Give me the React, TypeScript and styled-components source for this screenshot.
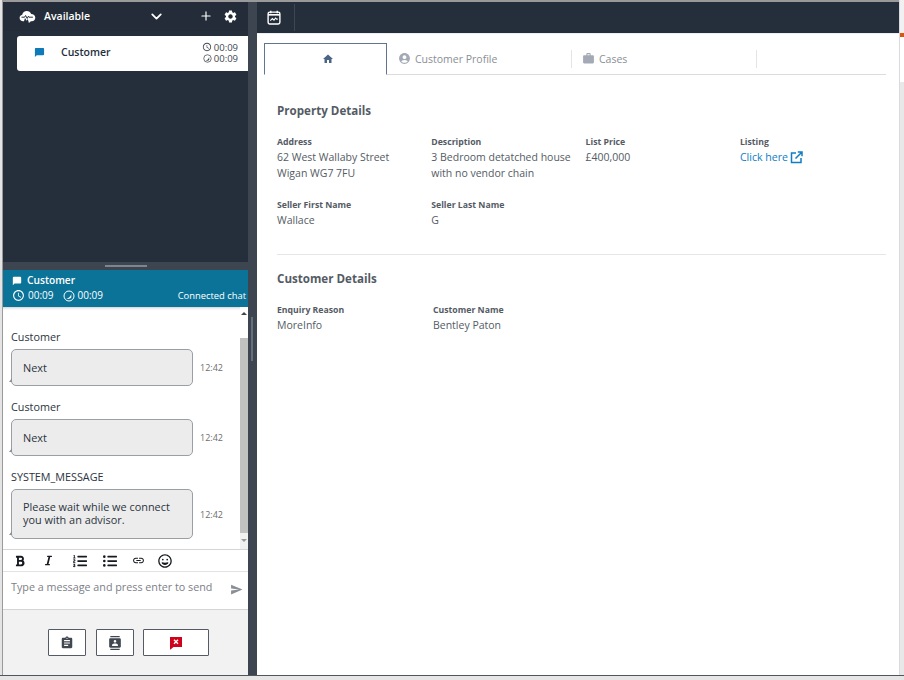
import React from "react";
import styled, { createGlobalStyle } from "styled-components";
import { FiChevronDown, FiPlus } from "react-icons/fi";
import { FaBold, FaItalic, FaListOl, FaListUl, FaRegGrin } from "react-icons/fa";
import {
  MdAccessTime,
  MdAccountCircle,
  MdAssignment,
  MdChatBubble,
  MdContacts,
  MdHome,
  MdLink,
  MdSend,
  MdSettings,
  MdWork,
} from "react-icons/md";

const GlobalStyle = createGlobalStyle`
  html, body {
    margin: 0;
    padding: 0;
    background: #e6e6e6;
    font-family: "Open Sans", "Noto Sans", "Liberation Sans", sans-serif;
  }
  * {
    box-sizing: border-box;
  }
`;

const Page = styled.div`
  width: 904px;
  height: 680px;
  overflow: hidden;
  background: #e6e6e6;
`;
const Window = styled.div`
  height: 676px;
  display: flex;
  padding: 2px 0 0 3px;
  background: linear-gradient(to right, #e4e4e4 0, #e4e4e4 2px, #9a9a9a 2px, #9a9a9a 3px);
  border-bottom: 1px solid #50565e;
`;
const Side = styled.div`
  width: 245px;
  display: flex;
  flex-direction: column;
  flex: none;
`;
const Gutter = styled.div`
  width: 9px;
  flex: none;
  background: #3c4550;
  padding: 315px 0 0 3px;
`;
const GutterGrip = styled.div`
  width: 2px;
  height: 44px;
  background: #66707b;
`;
const Main = styled.div`
  width: 642px;
  flex: none;
  display: flex;
  flex-direction: column;
`;
const QueuePanel = styled.div`
  height: 260px;
  background: #252f3b;
  display: flex;
  flex-direction: column;
`;
const StatusBar = styled.div`
  height: 29px;
  display: flex;
  align-items: center;
  padding: 0 10px 1px 16px;
  color: #fff;
  background: #232c38;
  font-size: 10.5px;
  font-weight: 600;
`;
const StatusLabel = styled.span`
  margin-left: 8px;
  width: 104px;
`;
const StatusTools = styled.div`
  display: flex;
  align-items: center;
  margin-left: auto;
  gap: 10px;
`;
const ContactCard = styled.div`
  margin: 5px 0 0 14px;
  height: 35px;
  background: #fff;
  border-radius: 3px 0 0 3px;
  display: flex;
  align-items: center;
  padding: 0 10px 2px 17px;
  color: #232f3e;
`;
const ContactName = styled.span`
  margin: 0 0 2px 16px;
  font-size: 10.5px;
  font-weight: 600;
  flex: 1;
`;
const Timers = styled.div`
  display: flex;
  flex-direction: column;
  font-size: 9.5px;
  line-height: 11px;
  color: #414750;
`;
const TimerRow = styled.div`
  display: flex;
  align-items: center;
  justify-content: flex-end;
  gap: 2px;
`;
const Splitter = styled.div`
  height: 8px;
  background: #3c4550;
  display: flex;
  justify-content: center;
  padding-top: 3px;
`;
const SplitGrip = styled.div`
  width: 42px;
  height: 2px;
  background: #7d858e;
`;
const ChatHeader = styled.div`
  height: 37px;
  background: #0b7398;
  color: #fff;
  padding: 3px 2px 0 9px;
  display: flex;
  flex-direction: column;
  font-size: 10px;
`;
const ChatTitle = styled.div`
  display: flex;
  align-items: center;
  gap: 5px;
  font-size: 10.2px;
  font-weight: 600;
  line-height: 15px;
`;
const ChatMeta = styled.div`
  display: flex;
  align-items: center;
  line-height: 15px;
  gap: 3px;
`;
const MetaGap = styled.span`
  width: 3px;
`;
const ChatState = styled.span`
  margin-left: auto;
  white-space: nowrap;
  font-size: 9.4px;
`;
const ChatBody = styled.div`
  height: 242px;
  background: #fff;
  display: flex;
  box-shadow: inset 0 3px 3px -2px rgba(0, 0, 0, 0.2);
`;
const Messages = styled.div`
  flex: 1;
  padding: 22px 0 0 8px;
  display: flex;
  flex-direction: column;
  gap: 13px;
  color: #2b3440;
`;
const Message = styled.div`
  display: flex;
  flex-direction: column;
  gap: 4px;
`;
const Sender = styled.div`
  font-size: 10.8px;
  line-height: 16px;
`;
const BubbleRow = styled.div`
  display: flex;
  align-items: center;
  gap: 7px;
`;
const Bubble = styled.div<{ $tall?: boolean }>`
  position: relative;
  width: 182px;
  height: ${(p) => (p.$tall ? "50px" : "37px")};
  padding: ${(p) => (p.$tall ? "0 11px 3px" : "0 11px 1px")};
  display: flex;
  align-items: center;
  background: #ececec;
  border: 1px solid #9a9fa5;
  border-radius: 5px;
  font-size: 10.9px;
  line-height: 13px;
  &::before {
    content: "";
    position: absolute;
    left: -3px;
    bottom: 3px;
    border-style: solid;
    border-width: 0 0 4px 3px;
    border-color: transparent transparent #8c9197 transparent;
  }
`;
const Time = styled.span`
  font-size: 9px;
  color: #6d6d6d;
`;
const ScrollTrack = styled.div`
  width: 8px;
  background: #f1f1f1;
  display: flex;
  flex-direction: column;
  align-items: center;
`;
const ScrollTop = styled.div`
  flex: none;
  height: 31px;
  width: 100%;
  background: #fff;
  display: flex;
  justify-content: center;
  padding-top: 5px;
  &::after {
    content: "";
    height: 0;
    border-style: solid;
    border-width: 0 3px 3px 3px;
    border-color: transparent transparent #444 transparent;
  }
`;
const ScrollThumb = styled.div`
  flex: 1;
  width: 100%;
  background: #c1c1c1;
`;
const ScrollEnd = styled.div`
  height: 16px;
  width: 100%;
  flex: none;
  display: flex;
  justify-content: center;
  padding-top: 6px;
  background: #f1f1f1;
  &::after {
    content: "";
    height: 0;
    border-style: solid;
    border-width: 3px 3px 0 3px;
    border-color: #9a9a9a transparent transparent transparent;
  }
`;
const FormatBar = styled.div`
  height: 23px;
  background: #fff;
  border-top: 1px solid #d5d5d5;
  border-bottom: 1px solid #e2e2e2;
  display: flex;
  align-items: center;
  padding-left: 11px;
  color: #16191f;
`;
const FormatButton = styled.span<{ $w: number }>`
  width: ${(p) => p.$w}px;
  flex: none;
  display: flex;
  align-items: center;
`;
const InputRow = styled.div`
  height: 38px;
  background: #fff;
  border-bottom: 1px solid #d5d5d5;
  display: flex;
  align-items: flex-start;
  padding: 8px 5px 0 8px;
  font-size: 10.75px;
  line-height: 15px;
  color: #7b8087;
`;
const Placeholder = styled.span`
  flex: 1;
  white-space: nowrap;
`;
const SendIcon = styled(MdSend)`
  margin-top: 3px;
  color: #8a8f95;
`;
const Actions = styled.div`
  flex: 1;
  background: #f2f2f2;
  display: flex;
  align-items: flex-start;
  padding: 19px 0 0 45px;
  gap: 10px;
`;
const ActionButton = styled.button<{ $wide?: boolean }>`
  width: ${(p) => (p.$wide ? "66px" : "38px")};
  margin-left: ${(p) => (p.$wide ? "-1px" : "0")};
  height: 27px;
  padding: 0;
  background: #fff;
  border: 1px solid #545b64;
  border-radius: 1px;
  display: flex;
  align-items: center;
  justify-content: center;
  color: #414750;
`;
const TopBar = styled.div`
  height: 31px;
  background: #252f3b;
  display: flex;
  align-items: center;
  padding: 0 0 1px 10px;
  flex: none;
`;
const TopDivider = styled.div`
  width: 1px;
  height: 27px;
  margin-left: 13px;
  background: #3d4754;
`;
const Content = styled.div`
  flex: 1;
  background: #fff;
  padding: 9px 13px 0 7px;
  border-top: 1px solid #eceff1;
  color: #545b64;
`;
const RightStrip = styled.div`
  width: 5px;
  flex: none;
  margin-top: -2px;
  display: flex;
  flex-direction: column;
  background: #e8e8e8;
  border-left: 1px solid #d9dade;
`;
const StripHead = styled.div`
  height: 33px;
  background: #f1f1f1;
  flex: none;
`;
const StripMark = styled.div`
  height: 4px;
  background: #d9580f;
  flex: none;
`;
const StripBlank = styled.div`
  height: 45px;
  background: #fff;
  flex: none;
`;
const Tabs = styled.div`
  height: 32px;
  display: flex;
  border-bottom: 1px solid #dcdcdc;
`;
const Tab = styled.div<{ $active?: boolean; $w: number; $inset?: number }>`
  width: ${(p) => p.$w}px;
  height: ${(p) => (p.$active ? "32px" : "31px")};
  flex: none;
  display: flex;
  align-items: center;
  gap: 4px;
  font-size: 10.5px;
  color: #8a8f95;
  ${(p) =>
    p.$active
      ? `
    justify-content: center;
    padding-left: 4px;
    background: #fff;
    border: 1px solid #5f7590;
    border-bottom: 1px solid #fff;
    color: #4c6584;
  `
      : `padding-left: ${p.$inset}px;`}
`;
const TabSeparator = styled.div`
  width: 1px;
  height: 18px;
  flex: none;
  background: #e4e4e4;
  margin-top: 7px;
`;
const Section = styled.div<{ $top?: number }>`
  padding: 0 0 0 13px;
  margin-top: ${(p) => p.$top ?? 0}px;
`;
const SectionTitle = styled.h2`
  margin: 0 0 16px;
  font-size: 11.6px;
  line-height: 16px;
  font-weight: 700;
  color: #545b64;
`;
const FieldGrid = styled.div<{ $cols: string }>`
  display: grid;
  grid-template-columns: ${(p) => p.$cols};
  row-gap: 17px;
`;
const Field = styled.div`
  display: flex;
  flex-direction: column;
`;
const FieldLabel = styled.div`
  font-size: 8.7px;
  line-height: 14px;
  font-weight: 700;
  color: #545b64;
`;
const FieldValue = styled.div`
  font-size: 10.5px;
  line-height: 16px;
  color: #545b64;
`;
const LinkValue = styled.a`
  font-size: 10.6px;
  line-height: 16px;
  color: #0f7ec2;
  display: flex;
  align-items: center;
  gap: 2px;
`;
const Rule = styled.div`
  height: 1px;
  margin: 26px 0 16px 13px;
  background: #e6e6e6;
`;

const AvailableIcon = () => (
  <svg width="17" height="13" viewBox="0 0 17 13" fill="#fff">
    <path d="M4.200 11.200C2 11.200.6 9.800.6 8c0-1.600 1.100-2.900 2.600-3.200C3.600 2.600 5.500 1 7.800 1c2 0 3.700 1.200 4.400 3 2.300 0 4.100 1.700 4.100 3.800 0 1.900-1.500 3.400-3.500 3.400h-.9L9.900 13 8.800 9 7.700 10.800 6 7.900 5 11.200z" />
    <path d="M2.500 7.200h3.100l1-1.700 1.600 3 1.200-2.300.6 1h3.900" fill="none" stroke="#252f3b" strokeWidth="1" />
  </svg>
);

const CalendarIcon = () => (
  <svg width="14" height="15" viewBox="0 0 13 14" fill="none">
    <rect x="1" y="2" width="11" height="11" rx="1.500" stroke="#fff" strokeWidth="1.300" />
    <path d="M1 4.500h11" stroke="#fff" strokeWidth="1.500" />
    <path d="M3.500.6v2.500M9.500.6v2.500" stroke="#fff" strokeWidth="1.300" />
    <path d="M3 10l2-2 1.500 1.500L8 7.500l1 1h1" stroke="#fff" strokeWidth="1" />
  </svg>
);

const TalkTimer = ({ size, color }: { size: number; color: string }) => (
  <svg width={size} height={size} viewBox="0 0 12 12" fill="none">
    <circle cx="6" cy="6" r="5" stroke={color} strokeWidth="1" />
    <path d="M3.200 8.600C5.500 8.600 7.700 7 8.300 3.800V7.500C7.500 8.800 5.200 9.400 3.200 8.600z" fill={color} />
  </svg>
);

const EndChatIcon = () => (
  <svg width="14" height="14" viewBox="0 0 14 14">
    <path d="M1 1h12v10H4.500L1.500 13.500H1z" fill="#d0021b" />
    <path d="M5 3.800l4 4M9 3.800l-4 4" stroke="#fff" strokeWidth="1.400" />
  </svg>
);

const ExternalIcon = () => (
  <svg width="13" height="13" viewBox="0 0 13 13" fill="none" stroke="#0f7ec2" strokeWidth="1.500">
    <path d="M6 2H1.500v9.500H11V7" />
    <path d="M5.500 7.500L11.500 1.500M7.800 1h4.200v4.200" />
  </svg>
);

const messages = [
  { sender: "Customer", text: "Next" },
  { sender: "Customer", text: "Next" },
  {
    sender: "SYSTEM_MESSAGE",
    text: "Please wait while we connect you with an advisor.",
    tall: true,
  },
];

const App: React.FC = () => {
  return (
    <Page>
      <GlobalStyle />
      <Window>
        <Side>
          <QueuePanel>
            <StatusBar>
              <AvailableIcon />
              <StatusLabel>Available</StatusLabel>
              <FiChevronDown size={17} strokeWidth={2.5} />
              <StatusTools>
                <FiPlus size={14} strokeWidth={2} />
                <MdSettings size={15} />
              </StatusTools>
            </StatusBar>
            <ContactCard>
              <MdChatBubble size={11} color="#0f7ab8" />
              <ContactName>Customer</ContactName>
              <Timers>
                <TimerRow>
                  <MdAccessTime size={10} />
                  00:09
                </TimerRow>
                <TimerRow>
                  <TalkTimer size={9} color="#414750" />
                  00:09
                </TimerRow>
              </Timers>
            </ContactCard>
          </QueuePanel>
          <Splitter>
            <SplitGrip />
          </Splitter>
          <ChatHeader>
            <ChatTitle>
              <MdChatBubble size={10} />
              Customer
            </ChatTitle>
            <ChatMeta>
              <MdAccessTime size={13} />
              00:09
              <MetaGap />
              <TalkTimer size={12} color="#fff" />
              00:09
              <ChatState>Connected chat</ChatState>
            </ChatMeta>
          </ChatHeader>
          <ChatBody>
            <Messages>
              {messages.map((m, i) => (
                <Message key={i}>
                  <Sender>{m.sender}</Sender>
                  <BubbleRow>
                    <Bubble $tall={m.tall}>{m.text}</Bubble>
                    <Time>12:42</Time>
                  </BubbleRow>
                </Message>
              ))}
            </Messages>
            <ScrollTrack>
              <ScrollTop />
              <ScrollThumb />
              <ScrollEnd />
            </ScrollTrack>
          </ChatBody>
          <FormatBar>
            <FormatButton $w={29}>
              <FaBold size={12} />
            </FormatButton>
            <FormatButton $w={30}>
              <FaItalic size={11} />
            </FormatButton>
            <FormatButton $w={30}>
              <FaListOl size={14} />
            </FormatButton>
            <FormatButton $w={29}>
              <FaListUl size={14} />
            </FormatButton>
            <FormatButton $w={26}>
              <MdLink size={13} />
            </FormatButton>
            <FormatButton $w={18}>
              <FaRegGrin size={14} />
            </FormatButton>
          </FormatBar>
          <InputRow>
            <Placeholder>Type a message and press enter to send</Placeholder>
            <SendIcon size={13} />
          </InputRow>
          <Actions>
            <ActionButton>
              <MdAssignment size={14} />
            </ActionButton>
            <ActionButton>
              <MdContacts size={14} />
            </ActionButton>
            <ActionButton $wide>
              <EndChatIcon />
            </ActionButton>
          </Actions>
        </Side>
        <Gutter>
          <GutterGrip />
        </Gutter>
        <Main>
          <TopBar>
            <CalendarIcon />
            <TopDivider />
          </TopBar>
          <Content>
            <Tabs>
              <Tab $active $w={123}>
                <MdHome size={12} />
              </Tab>
              <Tab $w={184} $inset={11}>
                <MdAccountCircle size={13} color="#a3aab5" />
                Customer Profile
              </Tab>
              <TabSeparator />
              <Tab $w={184} $inset={10}>
                <MdWork size={13} color="#a3aab5" />
                Cases
              </Tab>
              <TabSeparator />
            </Tabs>
            <Section $top={28}>
              <SectionTitle>Property Details</SectionTitle>
              <FieldGrid $cols="154.300px 154.300px 154.300px 1fr">
                <Field>
                  <FieldLabel>Address</FieldLabel>
                  <FieldValue>
                    62 West Wallaby Street
                    <br />
                    Wigan WG7 7FU
                  </FieldValue>
                </Field>
                <Field>
                  <FieldLabel>Description</FieldLabel>
                  <FieldValue>
                    3 Bedroom detatched house
                    <br />
                    with no vendor chain
                  </FieldValue>
                </Field>
                <Field>
                  <FieldLabel>List Price</FieldLabel>
                  <FieldValue>£400,000</FieldValue>
                </Field>
                <Field>
                  <FieldLabel>Listing</FieldLabel>
                  <LinkValue>
                    Click here <ExternalIcon />
                  </LinkValue>
                </Field>
                <Field>
                  <FieldLabel>Seller First Name</FieldLabel>
                  <FieldValue>Wallace</FieldValue>
                </Field>
                <Field>
                  <FieldLabel>Seller Last Name</FieldLabel>
                  <FieldValue>G</FieldValue>
                </Field>
              </FieldGrid>
            </Section>
            <Rule />
            <Section>
              <SectionTitle>Customer Details</SectionTitle>
              <FieldGrid $cols="156px 1fr">
                <Field>
                  <FieldLabel>Enquiry Reason</FieldLabel>
                  <FieldValue>MoreInfo</FieldValue>
                </Field>
                <Field>
                  <FieldLabel>Customer Name</FieldLabel>
                  <FieldValue>Bentley Paton</FieldValue>
                </Field>
              </FieldGrid>
            </Section>
          </Content>
        </Main>
        <RightStrip>
          <StripHead />
          <StripMark />
          <StripBlank />
        </RightStrip>
      </Window>
    </Page>
  );
};

export default App;
